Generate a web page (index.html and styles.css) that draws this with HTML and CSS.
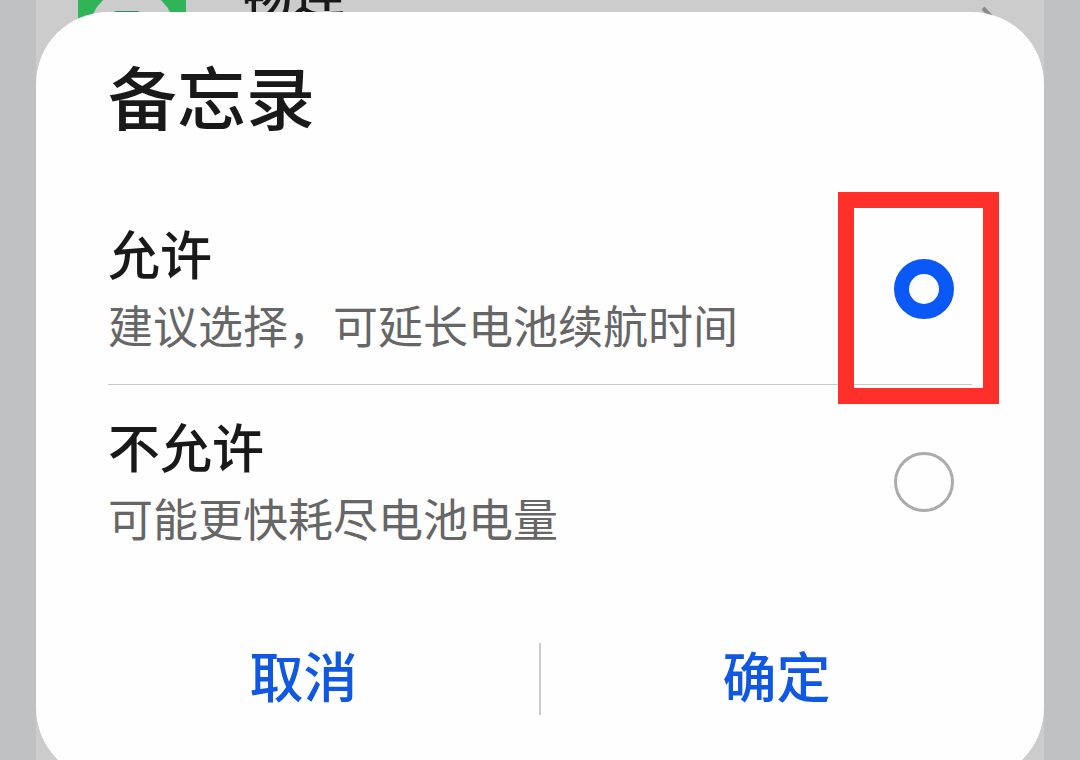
FILE: index.html
```
<!DOCTYPE html>
<html lang="zh-CN">
<head>
    <meta charset="UTF-8">
    <meta name="viewport" content="width=device-width, initial-scale=1.0">
    <title>备忘录</title>
    <link rel="stylesheet" href="styles.css">
</head>
<body>
    <div class="fondo" aria-hidden="true">
        <div class="app">
            <svg class="app-icon" viewBox="0 0 108 108">
                <rect width="108" height="108" rx="24" fill="#2fb457"/>
                <circle cx="54" cy="59" r="43" fill="#cccccc"/>
                <rect x="33" y="38" width="32" height="36" rx="6" fill="#2c8a68"/>
            </svg>
            <span class="app-name">畅连</span>
            <svg class="app-arrow" viewBox="0 0 24 44">
                <path d="M3 3l18 19L3 41" fill="none" stroke="#8c8c8c" stroke-width="4"/>
            </svg>
        </div>
    </div>
    <form class="dialog">
        <h1>备忘录</h1>
        <div class="options">
            <label class="option">
                <span class="text">
                    <span class="name">允许</span>
                    <span class="hint">建议选择，可延长电池续航时间</span>
                </span>
                <input type="radio" name="permiso" value="si" checked>
                <span class="marker"></span>
            </label>
            <label class="option">
                <span class="text">
                    <span class="name">不允许</span>
                    <span class="hint">可能更快耗尽电池电量</span>
                </span>
                <input type="radio" name="permiso" value="no">
            </label>
        </div>
        <div class="actions">
            <button type="button">取消</button>
            <span class="separator"></span>
            <button type="button">确定</button>
        </div>
    </form>
</body>
</html>
```
FILE: styles.css
```
:root {
    --azul: #0a59f7;
    --azul-texto: #1058e2;
    --rojo: #ff3029;
    --texto: #191919;
}
* {
    box-sizing: border-box;
}
body {
    position: relative;
    height: 100vh;
    margin: 0;
    padding: 12px 36px 0;
    overflow: hidden;
    background: #c0c1c3;
    color: var(--texto);
    font-family: "Noto Sans CJK SC", sans-serif;
}
/* app list behind the dialog */
.fondo {
    position: absolute;
    inset: 0 36px;
    overflow: hidden;
    background: #cccccc;
}
.app {
    display: flex;
    align-items: center;
    gap: 56px;
    height: 144px;
    margin-top: -45px;
    padding: 0 40px 0 42px;
}
.app-icon {
    width: 108px;
    height: 108px;
}
.app-name {
    flex: 1;
    align-self: flex-start;
    font-size: 51px;
    font-weight: 500;
    line-height: 72px;
}
.app-arrow {
    width: 24px;
    height: 44px;
}
.dialog {
    position: relative;
    padding: 43px 32px 65px;
    border-radius: 72px;
    background: #fefefe;
}
h1 {
    margin: 0 0 57px;
    padding: 0 40px;
    font-size: 69px;
    font-weight: 500;
    line-height: 80px;
}
.options {
    padding: 0 40px;
}
.option {
    position: relative;
    display: flex;
    align-items: center;
    justify-content: space-between;
    padding: 25px 18px 23px 0;
}
.option + .option {
    border-top: 1px solid #cacaca;
}
.name,
.hint {
    display: block;
    line-height: 72px;
}
.name {
    font-size: 52px;
    font-weight: 500;
}
.hint {
    color: #666666;
    font-size: 45px;
}
input[type="radio"] {
    appearance: none;
    flex: none;
    width: 60px;
    height: 60px;
    margin: 0;
    border: 3px solid #acacac;
    border-radius: 50%;
}
input[type="radio"]:checked {
    border: 15px solid var(--azul);
}
.marker {
    position: absolute;
    top: 0;
    right: -27px;
    bottom: -20px;
    width: 161px;
    border: 16px solid var(--rojo);
    z-index: 1;
    pointer-events: none;
}
.actions {
    display: flex;
    align-items: flex-start;
    margin-top: 66px;
}
.actions button {
    flex: 1;
    padding: 0;
    border: none;
    background: none;
    color: var(--azul-texto);
    font-family: inherit;
    font-size: 54px;
    font-weight: 500;
    line-height: 64px;
    cursor: pointer;
}
.separator {
    width: 2px;
    height: 72px;
    background: #cccccc;
}
```
